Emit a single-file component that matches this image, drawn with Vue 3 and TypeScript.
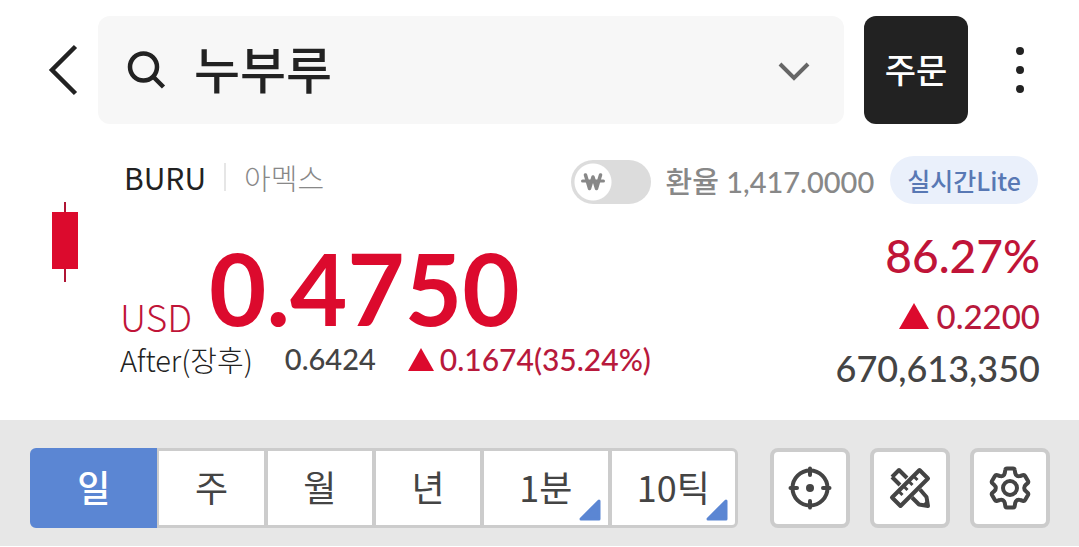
<script setup lang="ts">
import { ref } from 'vue'

interface Period {
  label: string
  wide: boolean
  menu: boolean
}

const periods: Period[] = [
  { label: '일', wide: true, menu: false },
  { label: '주', wide: false, menu: false },
  { label: '월', wide: false, menu: false },
  { label: '년', wide: false, menu: false },
  { label: '1분', wide: true, menu: true },
  { label: '10틱', wide: true, menu: true },
]

const stockName = ref('누부루')
const selected = ref('일')
const showWon = ref(false)
</script>

<template>
  <main class="page">
    <header class="header">
      <button class="back" type="button" aria-label="뒤로">
        <svg width="30" height="52" viewBox="0 0 30 52">
          <path d="M27.500 2.500 L4 26 L27.500 49.500" fill="none" stroke="#222" stroke-width="4.500" />
        </svg>
      </button>
      <div class="search">
        <svg class="lens" width="40" height="40" viewBox="0 0 40 40">
          <circle cx="17.500" cy="17" r="13.500" fill="none" stroke="#222" stroke-width="4.500" />
          <path d="M27 26.500 L37.500 37" stroke="#222" stroke-width="4.500" />
        </svg>
        <input v-model="stockName" class="name" type="text" aria-label="종목" />
        <button class="expand" type="button" aria-label="종목 목록">
          <svg width="32" height="22" viewBox="0 0 32 22">
            <path d="M2 5 L16 19 L30 5" fill="none" stroke="#666" stroke-width="4" />
          </svg>
        </button>
      </div>
      <button class="order" type="button">주문</button>
      <button class="more" type="button" aria-label="더보기">
        <svg width="8" height="48" viewBox="0 0 8 48">
          <circle cx="4" cy="5" r="4" fill="#222" />
          <circle cx="4" cy="24" r="4" fill="#222" />
          <circle cx="4" cy="43" r="4" fill="#222" />
        </svg>
      </button>
    </header>

    <section class="quote">
      <svg class="candle" width="26" height="80" viewBox="0 0 26 80">
        <rect x="12" y="0" width="2" height="80" fill="#b01535" />
        <rect x="0" y="10" width="26" height="57" fill="#dc0a2d" />
      </svg>
      <div class="details">
        <div class="meta">
          <div class="identity">
            <span class="ticker">BURU</span>
            <span class="divider"></span>
            <span class="market">아멕스</span>
          </div>
          <label class="rate">
            <span class="toggle">
              <input v-model="showWon" type="checkbox" role="switch" />
              <svg class="won" width="24" height="18" viewBox="0 0 24 18">
                <path d="M4.500 2 L8.500 15.500 L12 4 L15.500 15.500 L19.500 2" fill="none" stroke="#888" stroke-width="3.500" stroke-linejoin="round" stroke-linecap="round" />
                <path d="M1.500 8 H22.500" stroke="#888" stroke-width="3" stroke-linecap="round" />
              </svg>
            </span>
            <span class="rate-text">환율 1,417.0000</span>
          </label>
          <span class="live">실시간Lite</span>
        </div>
        <div class="figures">
          <div class="left">
            <div class="price">
              <span class="currency">USD</span>
              <strong class="value">0.4750</strong>
            </div>
            <div class="after">
              <span class="after-label">After(장후)</span>
              <span class="after-price">0.6424</span>
              <span class="after-change">
                <svg width="26" height="23" viewBox="0 0 26 23"><path d="M13 0 L26 23 H0 Z" fill="#dc0a2d" /></svg>
                0.1674(35.24%)
              </span>
            </div>
          </div>
          <div class="right">
            <span class="percent">86.27%</span>
            <span class="change">
              <svg width="30" height="26" viewBox="0 0 30 26"><path d="M15 0 L30 26 H0 Z" fill="#dc0a2d" /></svg>
              0.2200
            </span>
            <span class="volume">670,613,350</span>
          </div>
        </div>
      </div>
    </section>

    <nav class="toolbar">
      <div class="periods">
        <button
          v-for="p in periods"
          :key="p.label"
          type="button"
          class="period"
          :class="{ wide: p.wide, active: selected === p.label }"
          :aria-pressed="selected === p.label"
          @click="selected = p.label"
        >
          {{ p.label }}
          <svg v-if="p.menu" class="corner" width="22" height="22" viewBox="0 0 22 22">
            <path d="M20 2 V20 H2 Z" fill="#5b86d3" stroke="#5b86d3" stroke-width="3" stroke-linejoin="round" />
          </svg>
        </button>
      </div>
      <div class="tools">
        <button class="tool" type="button" aria-label="십자선">
          <svg width="44" height="44" viewBox="0 0 44 44" fill="none" stroke="#444" stroke-width="4" stroke-linecap="round">
            <circle cx="22" cy="22" r="17.500" />
            <path d="M22 2.500 V9 M22 35 V41.500 M2.500 22 H9 M35 22 H41.500" />
            <circle cx="22" cy="22" r="4" fill="#444" stroke="none" />
          </svg>
        </button>
        <button class="tool" type="button" aria-label="그리기 도구">
          <svg width="44" height="44" viewBox="0 0 44 44" fill="none" stroke="#444" stroke-width="4" stroke-linejoin="round">
            <path d="M4 11 L11 4 L19 12 M4 11 L12 19 M32 23.500 L38.500 31 L40 40 L31 38.500 L24 31.500" />
            <path d="M40 40 L39 35.500 L35.500 39 Z" fill="#444" stroke-width="2" />
            <path d="M31.500 4 L40 12.500 L12.500 40 L4 31.500 Z" />
            <path d="M25.500 10 L29.500 14 M20.500 15 L24.500 19 M15.500 20 L19.500 24 M10.500 25 L14.500 29" stroke-width="3" />
          </svg>
        </button>
        <button class="tool" type="button" aria-label="설정">
          <svg width="44" height="44" viewBox="0 0 44 44" fill="none" stroke="#444" stroke-width="4" stroke-linejoin="round">
            <path d="M19 2.500 H25 Q26.500 2.500 26.700 4 L27.200 7 Q27.600 9 29 9.800 Q30.500 10.700 32.300 10 L34.800 9.100 Q36.300 8.600 37.100 10 L40 15 Q40.700 16.300 39.600 17.300 L37.700 18.900 Q36.200 20.200 36.200 22 Q36.200 23.800 37.700 25.100 L39.600 26.700 Q40.700 27.700 40 29 L37.100 34 Q36.300 35.400 34.800 34.900 L32.300 34 Q30.500 33.300 29 34.200 Q27.600 35 27.200 37 L26.700 40 Q26.500 41.500 25 41.500 H19 Q17.500 41.500 17.300 40 L16.800 37 Q16.400 35 15 34.200 Q13.500 33.300 11.700 34 L9.200 34.900 Q7.700 35.400 6.900 34 L4 29 Q3.300 27.700 4.400 26.700 L6.300 25.100 Q7.800 23.800 7.800 22 Q7.800 20.200 6.300 18.900 L4.400 17.300 Q3.300 16.300 4 15 L6.900 10 Q7.700 8.600 9.200 9.100 L11.700 10 Q13.500 10.700 15 9.800 Q16.400 9 16.800 7 L17.300 4 Q17.500 2.500 19 2.500 Z" />
            <circle cx="22" cy="22" r="7" />
          </svg>
        </button>
      </div>
    </nav>
  </main>
</template>

<style>
body {
  margin: 0;
  background: #fff;
}
</style>

<style scoped>
.page {
  font-family: "Noto Sans CJK KR", sans-serif;
  color: #222;
}

button,
input {
  box-sizing: border-box;
  margin: 0;
  padding: 0;
  border: 0;
  background: none;
  font: inherit;
  color: inherit;
}

svg {
  display: block;
  flex: none;
}

.header {
  display: flex;
  align-items: center;
  padding: 16px 32px 0 48px;
}

.back {
  width: 50px;
}

.search {
  display: flex;
  flex: 1;
  align-items: center;
  min-width: 0;
  height: 108px;
  padding: 0 34px 0 28px;
  border-radius: 12px;
  background: #f7f7f7;
}

.name {
  flex: 1;
  min-width: 0;
  height: 80px;
  margin-left: 28px;
  padding-bottom: 6px;
  font-size: 50px;
  font-weight: 500;
}

.order {
  width: 104px;
  height: 108px;
  margin-left: 20px;
  padding-bottom: 4px;
  border-radius: 12px;
  background: #222;
  color: #fff;
  font-size: 34px;
  font-weight: 500;
}

.more {
  display: flex;
  justify-content: center;
  width: 56px;
  margin-left: 24px;
  margin-right: -1px;
}

.quote {
  display: flex;
  align-items: flex-start;
  padding: 32px 39px 28px 52px;
}

.candle {
  margin-top: 46px;
}

.details {
  flex: 1;
  min-width: 0;
  margin-left: 42px;
}

.meta {
  display: flex;
  align-items: center;
  height: 48px;
  white-space: nowrap;
}

.identity {
  display: flex;
  align-items: center;
  align-self: flex-start;
  height: 42px;
  margin-left: 4px;
}

.ticker {
  font-size: 30px;
  font-weight: 400;
}

.divider {
  width: 2px;
  height: 28px;
  margin: 0 18px;
  background: #e6e6e6;
}

.market {
  color: #888;
  font-size: 29px;
  font-weight: 300;
}

.rate {
  display: flex;
  align-items: center;
  gap: 14px;
  margin-left: auto;
}

.toggle {
  display: grid;
  align-items: center;
  padding-top: 4px;
}

.toggle input {
  grid-area: 1 / 1;
  width: 80px;
  height: 44px;
  border-radius: 22px;
  appearance: none;
  background: radial-gradient(circle at 22px 22px, #fff 18px, #dcdcdc 19px);
}

.won {
  grid-area: 1 / 1;
  margin-left: 10px;
}

.rate-text {
  color: #888;
  font-family: Lato, "Noto Sans CJK KR", sans-serif;
  font-size: 29px;
  font-weight: 500;
}

.live {
  margin-left: 16px;
  margin-right: 2px;
  padding: 0 17px;
  border-radius: 24px;
  background: #eaf0fb;
  color: #5878b4;
  font-size: 25px;
  font-weight: 500;
  line-height: 48px;
}

.figures {
  display: flex;
  justify-content: space-between;
  white-space: nowrap;
}

.left {
  padding-top: 34px;
}

.price {
  display: flex;
  align-items: flex-end;
  gap: 17px;
  color: #dc0a2d;
}

.currency {
  color: #c01438;
  font-size: 37px;
  font-weight: 300;
  line-height: 44px;
}

.value {
  font-family: Lato, sans-serif;
  font-size: 99px;
  font-weight: 700;
  line-height: 100px;
}

.after {
  display: flex;
  align-items: center;
  font-family: Lato, sans-serif;
  font-size: 30px;
  font-weight: 500;
  line-height: 42px;
}

.after-label {
  font-family: "Noto Sans CJK KR", sans-serif;
  font-size: 29px;
  font-weight: 300;
}

.after-price {
  margin-left: 32px;
  color: #444;
  font-size: 29px;
}

.after-change {
  display: flex;
  align-items: center;
  gap: 6px;
  margin-left: 32px;
  color: #b8193c;
}

.right {
  display: flex;
  flex-direction: column;
  align-items: flex-end;
  padding-top: 20px;
  font-family: Lato, sans-serif;
  font-weight: 500;
}

.percent {
  color: #c01438;
  font-size: 46px;
  line-height: 64px;
}

.change {
  display: flex;
  align-items: center;
  gap: 8px;
  color: #b8193c;
  font-size: 33px;
  line-height: 56px;
}

.volume {
  color: #444;
  font-size: 36px;
  line-height: 48px;
}

.toolbar {
  display: flex;
  gap: 32px;
  padding: 28px 29px 18px 30px;
  background: #e7e7e7;
}

.periods {
  display: flex;
  flex: 1;
  min-width: 0;
}

.period {
  position: relative;
  flex: 108 1 0;
  height: 80px;
  padding-bottom: 4px;
  border: solid #ccc;
  border-width: 3px 2px;
  background: #fff;
  color: #444;
  font-size: 36px;
  font-weight: 400;
}

.period.wide {
  flex-grow: 128;
}

.period:first-child {
  border-radius: 6px 0 0 6px;
}

.period:last-child {
  border-right-width: 3px;
  border-radius: 0 6px 6px 0;
}

.period.active {
  border-color: #5b86d3;
  background: #5b86d3;
  color: #fff;
  font-weight: 500;
}

.corner {
  position: absolute;
  right: 7px;
  bottom: 4px;
}

.tools {
  display: flex;
  gap: 20px;
}

.tool {
  display: grid;
  place-items: center;
  width: 80px;
  height: 80px;
  border: 4px solid #ccc;
  border-radius: 8px;
  background: #fff;
}
</style>
